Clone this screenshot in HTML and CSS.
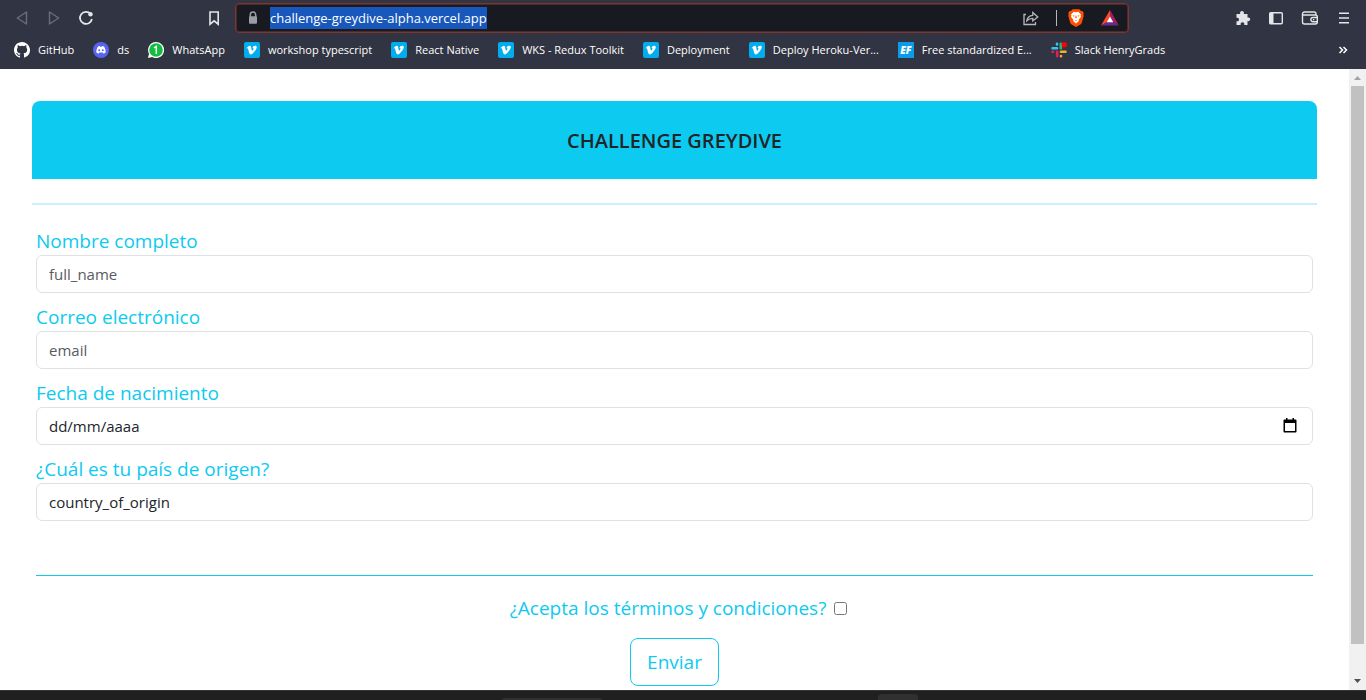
FILE: index.html
```html
<!DOCTYPE html>
<html lang="es">
<head>
<meta charset="utf-8">
<title>Challenge Greydive</title>
<link rel="stylesheet" href="styles.css">
</head>
<body>
<svg class="defs" aria-hidden="true">
  <symbol id="vimeo" viewBox="0 0 16 16"><rect width="16" height="16" rx="2" fill="#00adef"/><path fill="#fff" d="M12.8 5.2c0 1-.8 2.500-2.300 4.400S7.800 12.500 6.700 12.500c-.7 0-1.200-.6-1.700-1.900L4.300 7.400c-.2-.9-.4-1.200-.6-1.200l-.7.4-.4-.6c1.200-1 2.200-2.100 3-2.200.9-.1 1.400.5 1.600 1.700.4 2.200.6 3.300 1 3.300.3 0 1.200-1.400 1.300-2.100.1-.7-.3-.9-1-.6.4-1.600 1.300-2.400 2.600-2.400 1.100 0 1.700.5 1.700 1.500z"/></symbol>
</svg>
<header class="browser">
  <div class="toolbar">
    <nav class="nav-tools">
      <button class="tool dim" aria-label="Atrás"><svg width="16" height="16" viewBox="0 0 16 16"><path stroke-linejoin="round" d="M12.500 2v12L3.300 8z"/></svg></button>
      <button class="tool dim" aria-label="Adelante"><svg width="16" height="16" viewBox="0 0 16 16"><path stroke-linejoin="round" d="M3.500 2v12L12.700 8z"/></svg></button>
      <button class="tool" aria-label="Recargar"><svg width="16" height="16" viewBox="0 0 16 16"><path stroke-width="1.800" d="M12.600 4A6 6 0 1 0 13.900 9"/><circle cx="12.500" cy="4.300" r="2.200" class="solid"/></svg></button>
    </nav>
    <button class="tool" aria-label="Guardar marcador"><svg width="16" height="16" viewBox="0 0 16 16"><path stroke-width="1.600" d="M4 2h8.200v12.200L8.100 10.800 4 14.200z"/></svg></button>
    <div class="address">
      <svg width="16" height="16" viewBox="0 0 16 16"><path fill="none" stroke="#9a9da4" stroke-width="1.500" d="M5.300 7V4.800a2.700 2.700 0 0 1 5.400 0V7"/><rect x="4" y="6.300" width="8" height="7.500" rx="1" fill="#9a9da4"/></svg>
      <div class="url"><span class="selected">challenge-greydive-alpha.vercel.app</span></div>
      <button class="tool light" aria-label="Compartir"><svg width="18" height="16" viewBox="0 0 18 16"><path d="M4 4.500H2v10h11.500v-2.500"/><path d="M4.800 10.800c.5-3.300 2.600-5.300 6-5.500V2.500l5 4.500-5 4V8.300c-2.500 0-4.300.7-6 2.500z"/></svg></button>
      <span class="divider"></span>
      <button class="tool" aria-label="Brave Shields"><svg width="16" height="18" viewBox="0 0 16 18"><path fill="#ff5000" d="M4.600.3h6.800l1.700 1.600h1.400l1.300 2.300-.5 1.100.4 1.400-1.900 7c-.2.700-.5 1.100-1 1.500L8 17.900l-4.800-2.700c-.5-.4-.8-.8-1-1.500l-1.900-7 .4-1.400-.5-1.100 1.300-2.300h1.400z"/><path fill="#fff" d="M8 3.300l2.200-.5 2.800 2.700-.4 1 .4 1.200-2.300 3 .2 1.400L8 14.600l-2.900-2.500.2-1.400L3 7.700l.4-1.200-.4-1 2.800-2.700z"/><path fill="#ff5000" d="M4.400 6.300l2.200.4-.8 1zM11.600 6.300l-2.200.4.8 1zM7.700 6.500h.6l.5 2.300-.8.700-.8-.7zM6.300 10.800l1.700.6 1.700-.6-1.700 1.400z"/></svg></button>
      <button class="tool" aria-label="Brave Rewards"><svg width="18" height="16" viewBox="0 0 18 16"><path fill="#ff4724" d="M9 0L0 15.500 6.200 12 9 6.800z"/><path fill="#9e1f63" d="M9 0l9 15.500L11.800 12 9 6.800z"/><path fill="#662d91" d="M0 15.500h18L11.800 12H6.200z"/><path fill="#fff" d="M9 6.500l3.300 5.700H5.700z"/></svg></button>
    </div>
    <div class="right-tools">
      <button class="tool" aria-label="Extensiones"><svg width="16" height="16" viewBox="0 0 16 16"><path class="solid" d="M1.500 4h3.700c-.5-1.800.4-3 1.800-3s2.300 1.200 1.800 3h3.700v3.600c1.500-.5 2.700.4 2.700 1.700s-1.200 2.200-2.700 1.700V15H9.300c.4-1.700-.5-2.700-1.800-2.700S5.300 13.300 5.700 15H1.500v-3.800c1.700.4 2.500-.6 2.500-1.700S3.200 7.400 1.500 7.800z"/></svg></button>
      <button class="tool" aria-label="Barra lateral"><svg width="16" height="16" viewBox="0 0 16 16"><rect x="1.700" y="2.700" width="12.600" height="11" rx="1"/><path class="solid" d="M2 3h3.500v10.500H2z"/></svg></button>
      <button class="tool" aria-label="Cartera"><svg width="18" height="16" viewBox="0 0 18 16"><path d="M15 5V3.800C15 2.700 14.300 2 13.200 2H3.500C2.200 2 1.500 3 1.500 4v8c0 1.200.8 2 2 2h10.800c1.200 0 2-.8 2-2V7c0-1.200-.8-2-2-2H2"/><path d="M16 7.500h-4a2.100 2.100 0 0 0 0 4.200H16"/><path d="M12 9.600h1.300"/></svg></button>
      <button class="tool" aria-label="Menú"><svg width="16" height="16" viewBox="0 0 16 16"><path stroke-width="1.600" d="M3 3.200h10M3 8h10M3 12.800h10"/></svg></button>
    </div>
  </div>
  <nav class="bookmarks">
    <a href="#"><svg width="16" height="16" viewBox="0 0 16 16"><path fill="#fff" d="M8 0C3.580 0 0 3.580 0 8c0 3.540 2.290 6.530 5.470 7.590.4.070.55-.17.55-.38v-1.490c-2.010.37-2.530-.49-2.690-.94-.09-.23-.48-.94-.82-1.130-.28-.15-.68-.52-.01-.53.63-.01 1.080.58 1.230.82.72 1.210 1.870.87 2.330.66.070-.52.28-.87.51-1.070-1.780-.2-3.640-.89-3.640-3.950 0-.87.31-1.590.82-2.150-.08-.2-.36-1.020.08-2.120 0 0 .67-.21 2.200.82a7.600 7.600 0 0 1 4 0c1.530-1.040 2.200-.82 2.200-.82.44 1.100.16 1.920.08 2.120.51.560.82 1.270.82 2.150 0 3.070-1.870 3.750-3.650 3.950.29.250.54.730.54 1.480v2.200c0 .21.150.46.550.38A8 8 0 0 0 8 0z"/></svg>GitHub</a>
    <a href="#"><svg width="16" height="16" viewBox="0 0 16 16"><circle cx="8" cy="8" r="8" fill="#5865f2"/><path fill="#fff" d="M5 4.600l1.800-.5.400.7h1.600l.4-.7 1.800.5c1.300 1.900 1.800 3.900 1.600 5.800-.8.600-1.500 1-2.300 1.200l-.6-1H6.300l-.6 1c-.8-.2-1.500-.6-2.300-1.200-.2-1.900.3-3.900 1.600-5.800z"/><circle cx="6.200" cy="8.300" r="1" fill="#5865f2"/><circle cx="9.800" cy="8.300" r="1" fill="#5865f2"/></svg>ds</a>
    <a href="#"><svg width="16" height="16" viewBox="0 0 16 16"><path fill="#fff" d="M8 0a8 8 0 1 1-3.800 15L0 16l1-4.200A8 8 0 0 1 8 0z"/><circle cx="8" cy="8" r="6.800" fill="#12bd42"/><path fill="none" stroke="#fff" stroke-width="1.500" d="M6 6l2.300-1.600V12"/></svg>WhatsApp</a>
    <a href="#"><svg width="16" height="16"><use href="#vimeo"/></svg>workshop typescript</a>
    <a href="#"><svg width="16" height="16"><use href="#vimeo"/></svg>React Native</a>
    <a href="#"><svg width="16" height="16"><use href="#vimeo"/></svg>WKS - Redux Toolkit</a>
    <a href="#"><svg width="16" height="16"><use href="#vimeo"/></svg>Deployment</a>
    <a href="#"><svg width="16" height="16"><use href="#vimeo"/></svg>Deploy Heroku-Ver...</a>
    <a href="#"><span class="ef">EF</span>Free standardized E...</a>
    <a href="#"><svg width="16" height="16" viewBox="0 0 16 16" fill="none" stroke-width="2.600" stroke-linecap="round"><path stroke="#36c5f0" d="M1.500 6.200h4.500M6 1.800v.6"/><path stroke="#2eb67d" d="M9.800 1.800v4.400"/><path stroke="#ecb22e" d="M10 9.800h4.500M10 14v.3"/><path stroke="#e01e5a" d="M6.200 9.800v4.500M1.500 9.800h.6"/><circle cx="13.300" cy="2.700" r="2.700" fill="#f00"/></svg>Slack HenryGrads</a>
    <button class="more" aria-label="Más marcadores"><svg width="10" height="10" viewBox="0 0 10 10"><path d="M1.500 2l3 3-3 3M5.500 2l3 3-3 3"/></svg></button>
  </nav>
</header>
<div class="viewport">
  <main class="page">
    <h1 class="banner">CHALLENGE GREYDIVE</h1>
    <form class="survey">
      <div class="field"><label for="name">Nombre completo</label><input id="name" type="text" placeholder="full_name"></div>
      <div class="field"><label for="mail">Correo electrónico</label><input id="mail" type="email" placeholder="email"></div>
      <div class="field"><label for="birth">Fecha de nacimiento</label>
        <div class="date"><input id="birth" class="dark" type="text" placeholder="dd/mm/aaaa"><button type="button" class="calendar" aria-label="Abrir calendario"><svg width="14" height="15" viewBox="0 0 14 15"><path fill-rule="evenodd" d="M3 0h1.500v1.500h5V0H11v1.500h1.500c.6 0 1 .4 1 1v11c0 .6-.4 1-1 1h-11c-.6 0-1-.4-1-1v-11c0-.6.4-1 1-1H3zM2 5v8h10V5z"/></svg></button></div></div>
      <div class="field"><label for="country">¿Cuál es tu país de origen?</label><select id="country"><option>country_of_origin</option></select></div>
      <div class="closing">
        <div class="terms"><label for="terms">¿Acepta los términos y condiciones?</label><input id="terms" type="checkbox"></div>
        <button type="button" class="send">Enviar</button>
      </div>
    </form>
  </main>
  <div class="scrollbar" aria-hidden="true">
    <svg width="17" height="17" viewBox="0 0 17 17"><path fill="#a3a3a3" d="M5 11h7L8.500 7z"/></svg>
    <div class="track"><div class="thumb"></div></div>
    <svg width="17" height="17" viewBox="0 0 17 17"><path fill="#505050" d="M5 6h7l-3.500 4z"/></svg>
  </div>
</div>
<footer class="taskbar"><span class="task wide"></span><span class="task"></span></footer>
</body>
</html>
```
FILE: styles.css
```css
* { box-sizing: border-box; }
body {
  margin: 0;
  min-height: 100vh;
  display: flex;
  flex-direction: column;
  background: #fff;
  font-family: "Open Sans", "Noto Sans", sans-serif;
}
button { border: 0; padding: 0; background: none; font: inherit; }
svg { display: block; flex: none; }
.defs { position: absolute; width: 0; height: 0; }

.browser { background: #313442; color: #fff; height: 69px; }
.toolbar { display: flex; align-items: center; height: 36px; padding: 0 14px; }
.nav-tools { display: flex; gap: 16px; flex: 1; }
.tool svg { fill: none; stroke: #e4e5e8; stroke-width: 1.4; }
.tool .solid { fill: #e4e5e8; stroke: none; }
.tool.dim svg { stroke: #6b6e79; }
.address .tool svg { stroke: none; }
.address .tool.light svg { stroke: #b5b7bb; stroke-width: 1.3; }
.address {
  flex: 0 1 894px;
  display: flex;
  align-items: center;
  height: 30px;
  margin: 0 106px 0 13px;
  padding: 0 9px;
  border: 1px solid #7b3630;
  border-radius: 4px;
  background: #181a21;
  box-shadow: inset 0 0 0 1px #4f2927;
}
.url { flex: 1; padding-left: 9px; font-size: 13px; line-height: 22px; }
.selected { display: inline-block; background: #1858bd; }
.divider { width: 1px; height: 16px; margin: 0 11px 0 16px; background: #b5b7bb; }
.address .tool + .tool { margin-left: 17px; }
.right-tools { display: flex; gap: 17px; }

.bookmarks { display: flex; gap: 19px; align-items: center; height: 28px; padding: 0 18px 0 14px; font-size: 11px; line-height: 16px; white-space: nowrap; }
.bookmarks a { display: flex; align-items: center; gap: 8px; color: #fff; text-decoration: none; }
.ef { width: 16px; height: 16px; background: #0a9bea; font-size: 10px; font-weight: 800; font-style: italic; line-height: 16px; text-align: center; }
.more { margin-left: auto; }
.more svg { fill: none; stroke: #fff; stroke-width: 1.5; }

.viewport { flex: 1; display: flex; }
.page { flex: 1; padding: 32px 32px 4px; color: #0dcaf0; }
.banner { margin: 0; padding: 25px 24px 23px; border-radius: 8px 8px 0 0; background: #0dcaf0; color: #212529; font-size: 20px; line-height: 30px; font-weight: 600; text-align: center; }
.survey { margin-top: 24px; padding: 20px 4px 0; border-top: 2px solid #c3f2fb; font-size: 19px; line-height: 30px; }
.field { margin-bottom: 8px; }
.field label { display: block; padding-top: 2px; line-height: 28px; }
.field input, .field select {
  display: block;
  width: 100%;
  height: 38px;
  padding: 0 12px;
  border: 1px solid #dee2e6;
  border-radius: 6px;
  background: #fff;
  color: #212529;
  font: 15px "Open Sans", "Noto Sans", sans-serif;
  appearance: none;
}
.field input::placeholder { color: #595c5f; opacity: 1; }
.field input.dark::placeholder { color: #212529; }
.date { position: relative; }
.calendar { position: absolute; right: 16px; top: 11px; }
.closing { margin-top: 54px; padding-top: 17px; border-top: 1px solid #0dcaf0; text-align: center; }
.terms { display: flex; justify-content: center; align-items: center; gap: 8px; padding-left: 8px; }
.terms input { width: 13px; height: 13px; margin: 0; }
.send { height: 48px; margin-top: 15px; padding: 0 16px; border: 1px solid #0dcaf0; border-radius: 8px; color: #0dcaf0; }

.scrollbar { display: flex; flex-direction: column; width: 17px; background: #f1f1f1; }
.track { flex: 1; padding: 0 2px; }
.thumb { height: 95%; background: #c1c1c1; }
.taskbar { display: flex; height: 10px; align-items: flex-end; justify-content: center; gap: 276px; padding-left: 54px; border-top: 1px solid #353535; background: #202020; }
.task { width: 40px; height: 6px; border-radius: 4px 4px 0 0; background: #303030; }
.task.wide { width: 100px; height: 2px; }
```
